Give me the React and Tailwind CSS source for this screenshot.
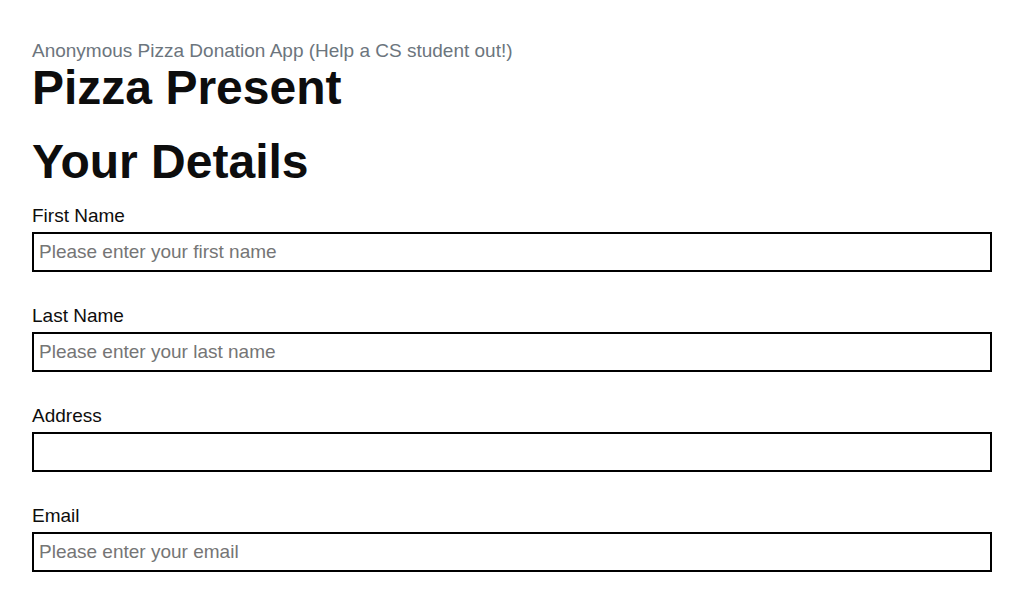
import React from 'react';

const fields = [
  { label: 'First Name', placeholder: 'Please enter your first name' },
  { label: 'Last Name', placeholder: 'Please enter your last name' },
  { label: 'Address', placeholder: '' },
  { label: 'Email', placeholder: 'Please enter your email' },
];

export default function App() {
  return (
    <div className="min-h-screen bg-white px-8 pt-[41px] pb-10 font-['Liberation_Sans',Arial,sans-serif] text-[#0d0d0d]">
      <p className="text-[19px] leading-[19px] text-[#6c757d]">
        Anonymous Pizza Donation App (Help a CS student out!)
      </p>
      <h1 className="text-[48px] leading-[55px] font-bold">Pizza Present</h1>

      <h2 className="mt-[19px] text-[48px] leading-[55px] font-bold">Your Details</h2>

      <form className="mt-[16px] flex flex-col">
        {fields.map((f, i) => (
          <div key={i} className="flex flex-col mb-[33px]">
            <label className="text-[19px] leading-[22px] mb-[5px]">{f.label}</label>
            <input
              type="text"
              placeholder={f.placeholder}
              className="h-[40px] w-full border-2 border-black px-[5px] text-[19px] outline-none placeholder:text-[#757575]"
            />
          </div>
        ))}
      </form>
    </div>
  );
}
